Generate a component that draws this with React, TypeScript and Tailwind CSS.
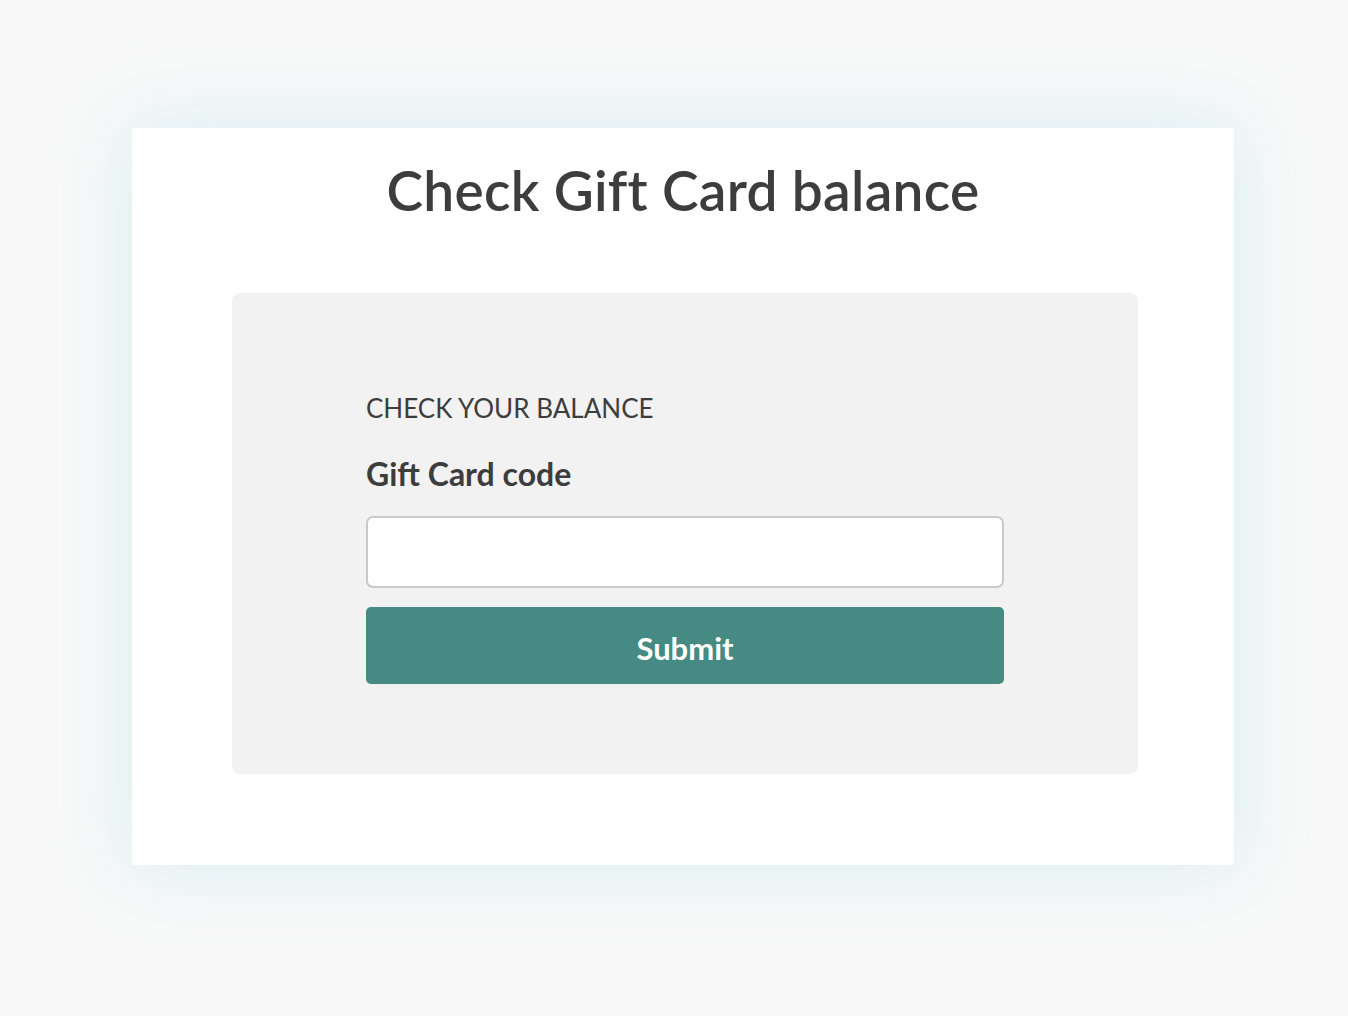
export default function App() {
  return (
    <div className="min-h-screen w-full bg-[#f9f9f9] pt-[128px] font-['Lato',sans-serif] text-[#3d3d3d]">
      <div className="ml-[132px] h-[737px] w-[1102px] rounded-[2px] bg-white pt-[30px] shadow-[0_0_75px_8px_rgba(178,224,232,0.4)]">
        <h1 className="text-center text-[55px] font-semibold leading-[64px] tracking-[0.3px]">Check Gift Card balance</h1>

        <div className="ml-[100px] mt-[71px] w-[906px] rounded-[8px] bg-[#f2f2f2] pb-[90px] pt-[99px]">
          <div className="mx-auto w-[638px]">
            <h2 className="text-[26px] font-normal uppercase leading-[32px]">Check your balance</h2>
            <label className="mt-[31px] block text-[32px] font-bold leading-[37px]">Gift Card code</label>
            <input
              type="text"
              className="mt-[24px] block h-[72px] w-full rounded-[7px] border-2 border-[#c9c9c9] bg-white px-4 text-[20px] outline-none"
            />
            <button className="mt-[19px] block h-[77px] w-full rounded-[5px] bg-[#468a84] pt-[5px] text-[31px] font-bold text-white">
              Submit
            </button>
          </div>
        </div>
      </div>
    </div>
  );
}
